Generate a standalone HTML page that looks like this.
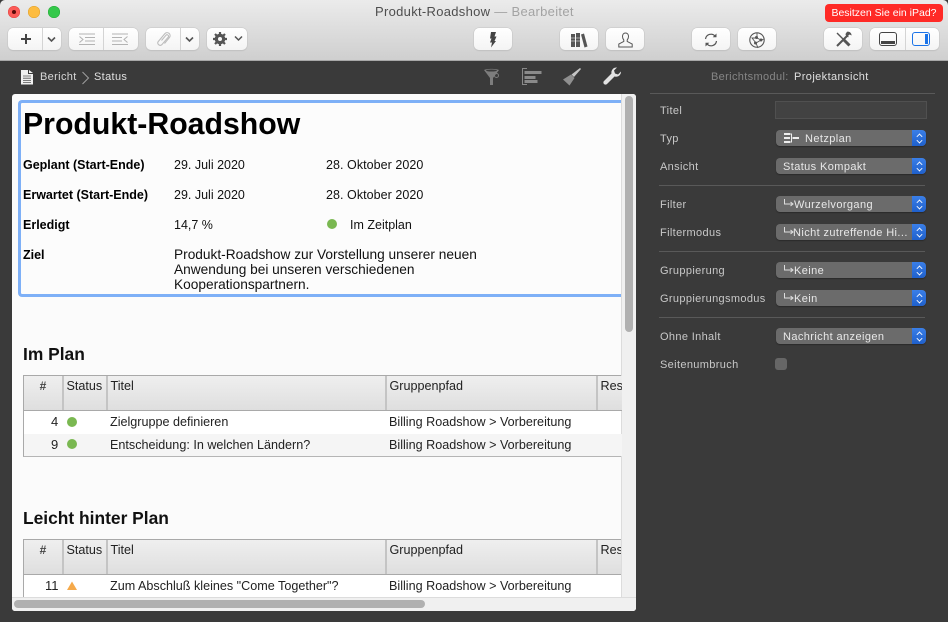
<!DOCTYPE html>
<html><head><meta charset="utf-8">
<style>
html,body{margin:0;padding:0}
body{width:948px;height:622px;overflow:hidden;background:#3a3a3a;position:relative;font-family:"Liberation Sans",sans-serif}
div,span,svg{position:absolute;box-sizing:border-box}
.t{white-space:nowrap;line-height:16px}
.btn{background:linear-gradient(#ffffff,#f4f4f4);border-radius:5px;box-shadow:0 0 0 .5px #c4c4c4,0 1px 1px #bcbcbc;height:22px;top:28px}
.sep{width:1px;top:28px;height:22px;background:#d4d4d4}
.l{color:#c8c8c8;font-size:11px;left:660px;letter-spacing:.35px}
.pop{left:776px;width:150px;height:16px;background:#6b6b6b;border-radius:4px;color:#e8e8e8;font-size:11px;line-height:16px;letter-spacing:.4px;box-shadow:0 1px 1px #2a2a2a;white-space:nowrap;overflow:hidden}
.pop b{position:absolute;right:0;top:0;width:14px;height:16px;background:linear-gradient(#3a7fe8,#1f60cc);border-radius:0 4px 4px 0}
.pop b:before{content:"";position:absolute;left:5px;top:4px;width:4px;height:4px;border-left:1px solid #fff;border-top:1px solid #fff;transform:rotate(45deg) scale(.85)}
.pop b:after{content:"";position:absolute;left:5px;top:8px;width:4px;height:4px;border-right:1px solid #fff;border-bottom:1px solid #fff;transform:rotate(45deg) scale(.85)}
.pop i{position:absolute;font-style:normal;left:7px;top:1px}
.pop svg{left:7px;top:3px}
.hr{left:659px;width:266px;height:1px;background:#595959}
.k{font-size:12.5px;font-weight:bold;color:#000;left:23px}
.v{font-size:12.5px;color:#111}
.th{background:linear-gradient(#efefef,#dedede);top:0;height:35px;font-size:12.6px;color:#222;line-height:20px;padding-left:2.5px;border-right:2px solid #c4c4c4;white-space:nowrap;overflow:hidden}
.td{font-size:12.6px;color:#222;white-space:nowrap;line-height:16px}
.dot{width:10px;height:10px;border-radius:50%;background:#7ab851}
h2{position:absolute;margin:0;font-size:17.4px;line-height:20px;color:#111;white-space:nowrap}
</style></head><body>

<!-- title bar -->
<div style="left:0;top:0;width:948px;height:61px;background:linear-gradient(#ebebeb,#cfcfcf);border-bottom:1px solid #a8a8a8;border-radius:5px 5px 0 0"></div>
<div style="left:8px;top:5.500px;width:12px;height:12px;border-radius:50%;background:#fc5b57;box-shadow:inset 0 0 0 .5px #df4744"></div>
<div style="left:12px;top:9.500px;width:4px;height:4px;border-radius:50%;background:#5a0a08"></div>
<div style="left:28px;top:5.500px;width:12px;height:12px;border-radius:50%;background:#fdbc40;box-shadow:inset 0 0 0 .5px #dd9f30"></div>
<div style="left:48px;top:5.500px;width:12px;height:12px;border-radius:50%;background:#34c84a;box-shadow:inset 0 0 0 .5px #28a83a"></div>
<div class="t" style="left:375px;top:4px;font-size:13px;letter-spacing:.3px;color:#4e4e4e">Produkt-Roadshow <span style="position:static;color:#a3a3a3">— Bearbeitet</span></div>
<div class="t" style="left:825px;top:4px;width:118px;height:18px;background:#ff2a26;border-radius:4px;color:#fff;font-size:10.500px;line-height:18px;text-align:center">Besitzen Sie ein iPad?</div>

<!-- toolbar -->
<div class="btn" style="left:8px;width:53px"></div><div class="sep" style="left:42px"></div>
<svg style="left:20px;top:32px" width="12" height="14" viewBox="0 0 12 14"><path d="M6 2v10M1 7h10" stroke="#444" stroke-width="2"/></svg>
<svg style="left:46px;top:36px" width="11" height="7" viewBox="0 0 11 7"><path d="M2 1.500l3.500 3.500 3.500-3.500" stroke="#555" stroke-width="1.600" fill="none"/></svg>

<div class="btn" style="left:69px;width:69px"></div><div class="sep" style="left:103px"></div>
<svg style="left:78px;top:33px" width="18" height="13" viewBox="0 0 18 13"><path d="M1 1h16M7 4.500h10M7 8h10M1 11.500h16M1.500 3.500l3.500 3-3.500 3" stroke="#b3b3b3" stroke-width="1" fill="none"/></svg>
<svg style="left:111px;top:33px" width="18" height="13" viewBox="0 0 18 13"><path d="M1 1h16M1 4.500h10M1 8h10M1 11.500h16M16.500 3.500l-3.500 3 3.500 3" stroke="#b3b3b3" stroke-width="1" fill="none"/></svg>

<div class="btn" style="left:146px;width:53px"></div><div class="sep" style="left:180px"></div>
<svg style="left:156px;top:31px" width="16" height="16" viewBox="0 0 16 16"><path d="M5.500 9.500L10 4.200a1.500 1.500 0 0 1 2.300 1.900L5.800 13.700a2.400 2.400 0 0 1-3.600-3.100L9 2.500a3 3 0 0 1 4.600 3.800L8.500 12.500" stroke="#bdbdbd" stroke-width="1.100" fill="none"/></svg>
<svg style="left:184px;top:36px" width="11" height="7" viewBox="0 0 11 7"><path d="M2 1.500l3.500 3.500 3.500-3.500" stroke="#555" stroke-width="1.600" fill="none"/></svg>

<div class="btn" style="left:207px;width:40px"></div>
<svg style="left:212px;top:31px" width="16" height="16" viewBox="0 0 16 16"><circle cx="8" cy="8" r="3.800" fill="none" stroke="#555" stroke-width="3"/><path d="M8 1v14M1 8h14M3 3l10 10M13 3L3 13" stroke="#555" stroke-width="2.200"/><circle cx="8" cy="8" r="2" fill="#f8f8f8"/></svg>
<svg style="left:233px;top:35px" width="11" height="7" viewBox="0 0 11 7"><path d="M2 1.500l3.500 3.500 3.500-3.500" stroke="#555" stroke-width="1.500" fill="none"/></svg>

<div class="btn" style="left:474px;width:38px"></div>
<svg style="left:487px;top:32px" width="12" height="16" viewBox="0 0 12 16"><path d="M4 0h5L7.500 4.500H9.500L7.500 9H9l-5 6.500L5 10.500H3l1.500-4H3z" fill="#444"/></svg>

<div class="btn" style="left:560px;width:38px"></div>
<svg style="left:570px;top:32px" width="18" height="16" viewBox="0 0 18 16"><path d="M1 2h4v13H1zM6 1h4v14H6z" fill="#555"/><path d="M11 2.500l3-1 3.500 13-3 1z" fill="#555"/><path d="M1 6h4M6 6h4M1 9h4M6 9h4" stroke="#fff" stroke-width=".6"/></svg>
<div class="btn" style="left:606px;width:38px"></div>
<svg style="left:617px;top:32px" width="17" height="16" viewBox="0 0 17 16"><path d="M8.500 1c2 0 3 1.600 3 3.500 0 1.500-.7 2.800-1.300 3.500v1.500l5 2.500V15h-13.400v-3l5-2.500V8c-.6-.7-1.300-2-1.300-3.500C5.500 2.600 6.500 1 8.500 1z" fill="none" stroke="#555" stroke-width="1"/></svg>

<div class="btn" style="left:692px;width:38px"></div>
<svg style="left:703px;top:32px" width="16" height="16" viewBox="0 0 16 16"><path d="M2.500 7a5.500 5.500 0 0 1 9.500-3M13.500 9a5.500 5.500 0 0 1-9.500 3" fill="none" stroke="#555" stroke-width="1.200"/><path d="M13.500 1.500v3.800H9.700zM2.500 14.500v-3.800h3.800z" fill="#555"/></svg>
<div class="btn" style="left:738px;width:38px"></div>
<svg style="left:748px;top:31px" width="18" height="18" viewBox="0 0 18 18"><circle cx="9" cy="9" r="7.200" fill="none" stroke="#555" stroke-width="1.100"/><path d="M9 2v5l4 2-5 3-4-5 5 0M8 12l2 5M13 9l3-1" fill="none" stroke="#555" stroke-width=".9"/><circle cx="8.500" cy="6.500" r="1.500" fill="#555"/><circle cx="7.500" cy="12" r="1.500" fill="#555"/><circle cx="13" cy="9" r="1.500" fill="#555"/></svg>

<div class="btn" style="left:824px;width:38px"></div>
<svg style="left:835px;top:31px" width="17" height="17" viewBox="0 0 17 17"><path d="M2 2l6 6" stroke="#555" stroke-width="1.400"/><path d="M8 8l6.500 6.500" stroke="#555" stroke-width="3"/><path d="M12 5L2 15" stroke="#555" stroke-width="2"/><path d="M12 .8a3.500 3.500 0 0 1 4.500 3.700l-1.800-1-1.400 1 .3 1.800A3.500 3.500 0 0 1 10.500 3z" fill="#555"/></svg>
<div class="btn" style="left:870px;width:69px"></div><div class="sep" style="left:905px"></div>
<div style="left:879px;top:32px;width:18px;height:14px;border:1px solid #444;border-radius:3px"></div>
<div style="left:881px;top:41px;width:14px;height:3px;background:#444"></div>
<div style="left:912px;top:32px;width:18px;height:14px;border:1px solid #1a73e8;border-radius:3px"></div>
<div style="left:925px;top:34px;width:3px;height:10px;background:#1a73e8"></div>

<!-- breadcrumb -->
<svg style="left:21px;top:70px" width="13" height="15" viewBox="0 0 13 15"><path d="M0 0h7v4h5v10.500H0z" fill="#f0f0f0"/><path d="M8 0l4 3H8z" fill="#f0f0f0"/><path d="M2 6h8M2 8.200h8M2 10.400h8M2 12.500h8" stroke="#555" stroke-width=".8"/></svg>
<div class="t" style="left:40px;top:69px;font-size:11px;letter-spacing:.35px;color:#d8d8d8">Bericht</div>
<svg style="left:81px;top:71px" width="9" height="14" viewBox="0 0 9 14"><path d="M1.500 1l6 6-6 6" stroke="#a0a0a0" fill="none"/></svg>
<div class="t" style="left:94px;top:69px;font-size:11px;letter-spacing:.35px;color:#e0e0e0">Status</div>

<svg style="left:483px;top:68px" width="18" height="18" viewBox="0 0 18 18"><path d="M1 2c3-1.500 12-1.500 15 0l-6 8v7H7v-7z" fill="#7d7d7d"/><ellipse cx="8.500" cy="2.500" rx="5.500" ry="1" fill="#3a3a3a"/><circle cx="13.500" cy="7.500" r="2" fill="none" stroke="#7d7d7d"/></svg>
<svg style="left:521px;top:68px" width="22" height="18" viewBox="0 0 22 18"><path d="M6 .5H1.500v16H6" fill="none" stroke="#8a8a8a"/><path d="M3.500 3h17v3h-17zM3.500 8h11v3h-11zM3.500 12h13v3h-13z" fill="#8a8a8a"/></svg>
<svg style="left:562px;top:67px" width="20" height="20" viewBox="0 0 20 20"><path d="M18 1l1 1-7 8-2.500-2.500z" fill="#c5c5c5"/><path d="M9 7.500l3.500 3.500-5 7.500L1 12.500z" fill="#8f8f8f"/></svg>
<svg style="left:602px;top:67px" width="20" height="20" viewBox="0 0 20 20"><path d="M19 4.500a5 5 0 0 1-6.500 5L5 17a2 2 0 0 1-3-3l7.500-7.500a5 5 0 0 1 5.500-6l-3 3 1 3 3 1z" fill="#e2e2e2"/></svg>

<div class="t" style="left:711px;top:69px;font-size:11px;letter-spacing:.35px;color:#868686">Berichtsmodul:</div>
<div class="t" style="left:794px;top:69px;font-size:11px;letter-spacing:.4px;color:#e0e0e0">Projektansicht</div>

<!-- doc panel -->
<div style="left:12px;top:94px;width:624px;height:517px;background:#fbfbfb;border-radius:3px;overflow:hidden">
  <div style="left:609px;top:0;width:15px;height:517px;background:#f0f0f0;border-left:1px solid #dcdcdc"></div>
  <div style="left:0;top:503px;width:624px;height:14px;background:#f0f0f0;border-top:1px solid #dcdcdc"></div>
  <div style="left:613px;top:2px;width:8px;height:236px;background:#b0b0b0;border-radius:4px"></div>
  <div style="left:2px;top:506px;width:411px;height:8px;background:#b0b0b0;border-radius:4px"></div>
</div>

<div style="left:18px;top:100px;width:603px;height:197px;border:3px solid #7eb0f7;border-right:none;border-radius:4px 0 0 4px;background:#fcfcfc"></div>
<div class="t" style="left:23px;top:106px;font-size:30.250px;line-height:38px;font-weight:bold;color:#000">Produkt-Roadshow</div>

<div class="t k" style="top:157px">Geplant (Start-Ende)</div>
<div class="t v" style="left:174px;top:157px">29. Juli 2020</div>
<div class="t v" style="left:326px;top:157px;letter-spacing:.05px">28. Oktober 2020</div>
<div class="t k" style="top:187px">Erwartet (Start-Ende)</div>
<div class="t v" style="left:174px;top:187px">29. Juli 2020</div>
<div class="t v" style="left:326px;top:187px;letter-spacing:.05px">28. Oktober 2020</div>
<div class="t k" style="top:217px">Erledigt</div>
<div class="t v" style="left:174px;top:217px">14,7 %</div>
<div class="dot" style="left:327px;top:219px"></div>
<div class="t v" style="left:350px;top:217px">Im Zeitplan</div>
<div class="t k" style="top:247px">Ziel</div>
<div class="t v" style="left:174px;top:247px;line-height:15px;font-size:13.700px">Produkt-Roadshow zur Vorstellung unserer neuen<br>Anwendung bei unseren verschiedenen<br>Kooperationspartnern.</div>

<h2 style="left:23px;top:344px">Im Plan</h2>
<div style="left:23px;top:375px;width:598px;height:82px;border:1px solid #a9a9a9;border-right:none;border-bottom:1px solid #b5b5b5;background:#fff">
  <div class="th" style="left:0;width:40px;text-align:center;font-weight:bold;padding:0;color:#444;font-size:12px">#</div>
  <div class="th" style="left:40px;width:44px">Status</div>
  <div class="th" style="left:84px;width:279px">Titel</div>
  <div class="th" style="left:363px;width:211px">Gruppenpfad</div>
  <div class="th" style="left:574px;width:24px;border:none">Res</div>
  <div style="left:0;top:34px;width:598px;height:1px;background:#a9a9a9"></div>
  <div style="left:0;top:58px;width:598px;height:22px;background:#f5f5f5"></div>
</div>
<div class="td" style="left:51px;top:414px;font-size:13px">4</div><div class="dot" style="left:67px;top:417px"></div>
<div class="td" style="left:110px;top:414px">Zielgruppe definieren</div><div class="td" style="left:389px;top:414px">Billing Roadshow &gt; Vorbereitung</div>
<div class="td" style="left:51px;top:437px;font-size:13px">9</div><div class="dot" style="left:67px;top:439px"></div>
<div class="td" style="left:110px;top:437px">Entscheidung: In welchen Ländern?</div><div class="td" style="left:389px;top:437px">Billing Roadshow &gt; Vorbereitung</div>

<h2 style="left:23px;top:508px">Leicht hinter Plan</h2>
<div style="left:23px;top:539px;width:598px;height:58px;border:1px solid #a9a9a9;border-right:none;border-bottom:none;background:#fff;overflow:hidden">
  <div class="th" style="left:0;width:40px;text-align:center;font-weight:bold;padding:0;color:#444;font-size:12px">#</div>
  <div class="th" style="left:40px;width:44px">Status</div>
  <div class="th" style="left:84px;width:279px">Titel</div>
  <div class="th" style="left:363px;width:211px">Gruppenpfad</div>
  <div class="th" style="left:574px;width:24px;border:none">Res</div>
  <div style="left:0;top:34px;width:598px;height:1px;background:#a9a9a9"></div>
</div>
<div class="td" style="left:45px;top:578px;font-size:13px">11</div>
<svg style="left:66px;top:581px" width="12" height="10" viewBox="0 0 12 10"><path d="M6 .5l5 8.500H1z" fill="#f5a94a"/></svg>
<div class="td" style="left:110px;top:578px">Zum Abschluß kleines "Come Together"?</div><div class="td" style="left:389px;top:578px">Billing Roadshow &gt; Vorbereitung</div>

<!-- inspector -->
<div class="hr" style="top:93px;left:650px;width:285px"></div>
<div class="t l" style="top:103px">Titel</div>
<div style="left:775px;top:101px;width:152px;height:18px;background:#424242;border:1px solid #505050"></div>
<div class="t l" style="top:131px">Typ</div>
<div class="pop" style="top:130px"><svg style="left:8px;top:2px" width="16" height="12" viewBox="0 0 16 12"><path d="M0 1h6v2H0zM0 5h6v2H0zM0 9h6v2H0zM9 5h6v2H9z" fill="#eee"/><path d="M6 2h1.500v8H6M7.500 6H9" stroke="#eee" fill="none"/></svg><i style="left:29px">Netzplan</i><b></b></div>
<div class="t l" style="top:159px">Ansicht</div>
<div class="pop" style="top:158px"><i>Status Kompakt</i><b></b></div>
<div class="hr" style="top:185px"></div>
<div class="t l" style="top:197px">Filter</div>
<div class="pop" style="top:196px"><svg width="11" height="9" viewBox="0 0 11 9"><path d="M1.500 0v5h8M7.500 3l2.500 2-2.500 2" stroke="#ddd" fill="none" stroke-width="1"/></svg><i style="left:18px">Wurzelvorgang</i><b></b></div>
<div class="t l" style="top:225px">Filtermodus</div>
<div class="pop" style="top:224px"><svg width="11" height="9" viewBox="0 0 11 9"><path d="M1.500 0v5h8M7.500 3l2.500 2-2.500 2" stroke="#ddd" fill="none" stroke-width="1"/></svg><i style="left:17px">Nicht zutreffende Hi...</i><b></b></div>
<div class="hr" style="top:251px"></div>
<div class="t l" style="top:263px">Gruppierung</div>
<div class="pop" style="top:262px"><svg width="11" height="9" viewBox="0 0 11 9"><path d="M1.500 0v5h8M7.500 3l2.500 2-2.500 2" stroke="#ddd" fill="none" stroke-width="1"/></svg><i style="left:18px">Keine</i><b></b></div>
<div class="t l" style="top:291px">Gruppierungsmodus</div>
<div class="pop" style="top:290px"><svg width="11" height="9" viewBox="0 0 11 9"><path d="M1.500 0v5h8M7.500 3l2.500 2-2.500 2" stroke="#ddd" fill="none" stroke-width="1"/></svg><i style="left:18px">Kein</i><b></b></div>
<div class="hr" style="top:317px"></div>
<div class="t l" style="top:329px">Ohne Inhalt</div>
<div class="pop" style="top:328px"><i>Nachricht anzeigen</i><b></b></div>
<div class="t l" style="top:357px">Seitenumbruch</div>
<div style="left:775px;top:358px;width:12px;height:12px;border-radius:3px;background:#666"></div>
</body></html>
